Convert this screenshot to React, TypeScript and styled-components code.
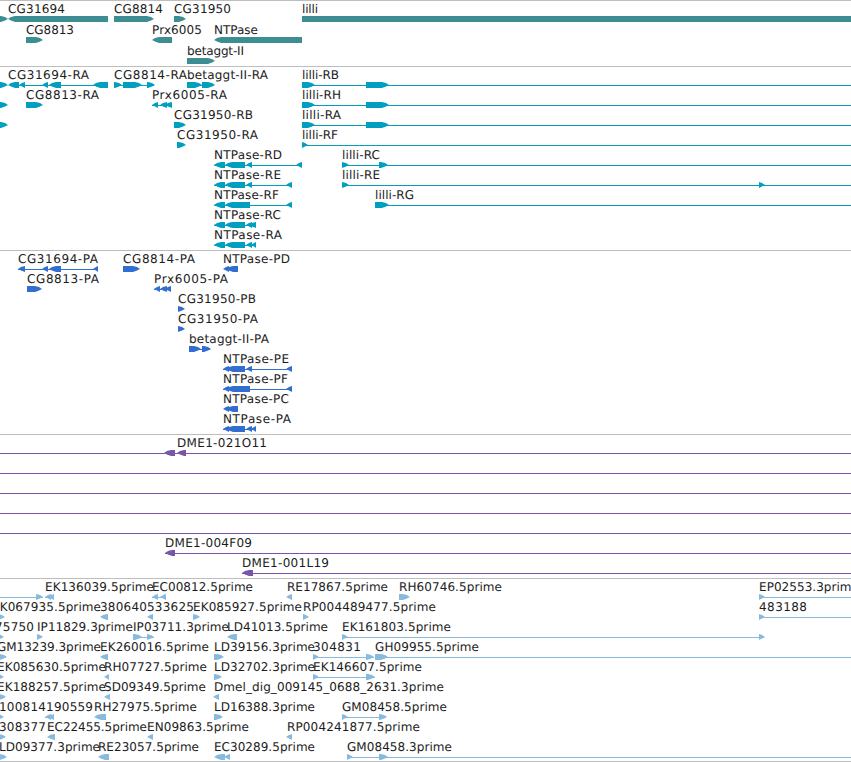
import React from 'react';
import styled, { createGlobalStyle } from 'styled-components';

type Dir = '<' | '>' | '-';
type Exon = [start: number, end: number, dir: Dir];
type Label = [x: number, text: string, width: number];

interface Lane {
  labels?: Label[];
  exons?: Exon[];
  introns?: [number, number][];
}

interface TrackData {
  name: string;
  color: string;
  laneHeight: number;
  lanes: Lane[];
}

const WIDTH = 851;

const tracks: TrackData[] = [
  {
    name: 'genes',
    color: '#3d8e92',
    laneHeight: 21,
    lanes: [
      {
        labels: [[8, 'CG31694', 57], [114, 'CG8814', 49], [174, 'CG31950', 57], [302, 'lilli', 16]],
        exons: [[-9, 8, '>'], [8, 108, '<'], [114, 154, '>'], [174, 186, '>'], [302, 851, '-']],
      },
      {
        labels: [[26, 'CG8813', 48], [152, 'Prx6005', 50], [214, 'NTPase', 44]],
        exons: [[26, 43, '>'], [152, 172, '<'], [214, 302, '<']],
      },
      { labels: [[187, 'betaggt-II', 57]], exons: [[187, 215, '>']] },
    ],
  },
  {
    name: 'transcripts',
    color: '#009fbf',
    laneHeight: 20,
    lanes: [
      {
        labels: [[8, 'CG31694-RA', 81], [114, 'CG8814-RA', 73], [187, 'betaggt-II-RA', 81], [302, 'lilli-RB', 37]],
        exons: [
          [-9, 8, '>'], [8, 19, '<'], [19, 25, '<'], [42, 48, '<'], [49, 61, '<'], [93, 108, '<'],
          [114, 122, '>'], [123, 142, '>'], [147, 155, '>'],
          [187, 202, '>'], [202, 215, '>'], [302, 315, '>'], [366, 389, '>'],
        ],
        introns: [[19, 98], [114, 154], [187, 214], [302, WIDTH]],
      },
      {
        labels: [[26, 'CG8813-RA', 73], [152, 'Prx6005-RA', 75], [302, 'lilli-RH', 39]],
        exons: [[-9, 8, '>'], [26, 43, '>'], [152, 158, '<'], [160, 167, '<'], [165, 172, '<'], [302, 315, '>'], [366, 389, '>']],
        introns: [[152, 172], [302, WIDTH]],
      },
      {
        labels: [[174, 'CG31950-RB', 79], [302, 'lilli-RA', 39]],
        exons: [[-9, 8, '>'], [174, 186, '>'], [302, 315, '>'], [366, 389, '>']],
        introns: [[302, WIDTH]],
      },
      {
        labels: [[177, 'CG31950-RA', 81], [302, 'lilli-RF', 36]],
        exons: [[177, 186, '>'], [302, 308, '>']],
        introns: [[302, WIDTH]],
      },
      {
        labels: [[214, 'NTPase-RD', 68], [342, 'lilli-RC', 38]],
        exons: [[214, 225, '<'], [225, 245, '<'], [246, 252, '<'], [296, 302, '<'], [342, 349, '>'], [379, 388, '>']],
        introns: [[214, 302], [342, WIDTH]],
      },
      {
        labels: [[214, 'NTPase-RE', 67], [342, 'lilli-RE', 38]],
        exons: [[214, 225, '<'], [225, 245, '<'], [246, 252, '<'], [286, 292, '<'], [342, 349, '>'], [759, 765, '>']],
        introns: [[214, 292], [342, WIDTH]],
      },
      {
        labels: [[214, 'NTPase-RF', 65], [375, 'lilli-RG', 39]],
        exons: [[214, 225, '<'], [225, 250, '<'], [286, 292, '<'], [375, 389, '>']],
        introns: [[214, 292], [375, WIDTH]],
      },
      {
        labels: [[214, 'NTPase-RC', 67]],
        exons: [[214, 225, '<'], [225, 245, '<'], [246, 252, '<'], [249, 256, '<']],
        introns: [[214, 256]],
      },
      {
        labels: [[214, 'NTPase-RA', 68]],
        exons: [[214, 225, '<'], [225, 245, '<'], [246, 252, '<'], [251, 256, '<']],
        introns: [[214, 256]],
      },
    ],
  },
  {
    name: 'proteins',
    color: '#326ecf',
    laneHeight: 20,
    lanes: [
      {
        labels: [[18, 'CG31694-PA', 80], [123, 'CG8814-PA', 72], [223, 'NTPase-PD', 67]],
        exons: [[18, 25, '<'], [42, 48, '<'], [49, 61, '<'], [93, 98, '<'], [123, 140, '>'], [223, 229, '<'], [226, 238, '<']],
        introns: [[18, 98]],
      },
      {
        labels: [[27, 'CG8813-PA', 72], [154, 'Prx6005-PA', 74]],
        exons: [[27, 42, '>'], [154, 160, '<'], [160, 167, '<'], [165, 171, '<']],
        introns: [[154, 171]],
      },
      { labels: [[178, 'CG31950-PB', 78]], exons: [[178, 185, '>']] },
      { labels: [[178, 'CG31950-PA', 80]], exons: [[178, 185, '>']] },
      {
        labels: [[189, 'betaggt-II-PA', 80]],
        exons: [[189, 201, '>'], [202, 211, '>']],
        introns: [[189, 210]],
      },
      {
        labels: [[223, 'NTPase-PE', 66]],
        exons: [[223, 229, '<'], [226, 245, '<'], [246, 252, '<'], [286, 292, '<']],
        introns: [[223, 292]],
      },
      {
        labels: [[223, 'NTPase-PF', 65]],
        exons: [[223, 229, '<'], [226, 250, '<'], [286, 292, '<']],
        introns: [[223, 292]],
      },
      { labels: [[223, 'NTPase-PC', 66]], exons: [[223, 229, '<'], [226, 238, '<']] },
      {
        labels: [[223, 'NTPase-PA', 68]],
        exons: [[223, 229, '<'], [226, 245, '<'], [246, 252, '<'], [251, 256, '<']],
        introns: [[223, 256]],
      },
    ],
  },
  {
    name: 'clones',
    color: '#7755a9',
    laneHeight: 20,
    lanes: [
      {
        labels: [[177, 'DME1-021O11', 90]],
        exons: [[164, 175, '<'], [177, 186, '<']],
        introns: [[0, WIDTH]],
      },
      { introns: [[0, WIDTH]] },
      { introns: [[0, WIDTH]] },
      { introns: [[0, WIDTH]] },
      { introns: [[0, WIDTH]] },
      { labels: [[165, 'DME1-004F09', 87]], exons: [[165, 175, '<']], introns: [[165, WIDTH]] },
      { labels: [[242, 'DME1-001L19', 87]], exons: [[242, 253, '<']], introns: [[242, WIDTH]] },
    ],
  },
  {
    name: 'ests',
    color: '#87badd',
    laneHeight: 20,
    lanes: [
      {
        labels: [
          [45, 'EK136039.5prime', 109], [152, 'EC00812.5prime', 101], [287, 'RE17867.5prime', 101],
          [399, 'RH60746.5prime', 103], [759, 'EP02553.3prime', 100],
        ],
        exons: [
          [36, 43, '>'], [45, 51, '<'], [48, 54, '<'], [152, 158, '<'], [160, 166, '<'],
          [286, 292, '<'], [399, 410, '>'], [759, 765, '>'],
        ],
        introns: [[0, 43], [45, 54], [152, 166], [759, WIDTH]],
      },
      {
        labels: [
          [-8, 'EK067935.5prime', 109], [100, '380640', 47], [147, '533625', 47], [193, 'EK085927.5prime', 109],
          [303, 'RP004489477.5prime', 133], [759, '483188', 48],
        ],
        exons: [[-6, 5, '>'], [100, 108, '<'], [147, 153, '<'], [193, 200, '>'], [303, 309, '>'], [759, 765, '>']],
        introns: [[759, WIDTH]],
      },
      {
        labels: [
          [-5, '75750', 39], [37, 'IP11829.3prime', 96], [133, 'IP03711.3prime', 96],
          [227, 'LD41013.5prime', 101], [342, 'EK161803.5prime', 109],
        ],
        exons: [[-6, 4, '>'], [37, 43, '>'], [133, 142, '>'], [147, 154, '>'], [227, 237, '<'], [342, 348, '>'], [759, 765, '>']],
        introns: [[133, 154], [342, 764]],
      },
      {
        labels: [
          [-3, 'GM13239.3prime', 104], [100, 'EK260016.5prime', 109], [214, 'LD39156.3prime', 101],
          [313, '304831', 48], [375, 'GH09955.5prime', 104],
        ],
        exons: [[-8, 7, '>'], [100, 108, '<'], [214, 224, '>'], [313, 319, '>'], [366, 374, '>'], [375, 388, '>']],
        introns: [[313, 374], [375, WIDTH]],
      },
      {
        labels: [
          [-3, 'EK085630.5prime', 109], [104, 'RH07727.5prime', 103], [214, 'LD32702.3prime', 101],
          [313, 'EK146607.5prime', 109],
        ],
        exons: [[-6, 4, '>'], [104, 109, '<'], [214, 222, '>'], [313, 319, '>'], [366, 375, '>']],
        introns: [[313, 375]],
      },
      {
        labels: [[-3, 'EK188257.5prime', 109], [104, 'SD09349.5prime', 102], [214, 'Dmel_dig_009145_0688_2631.3prime', 230]],
        exons: [[-6, 6, '>'], [104, 110, '<'], [213, 219, '<']],
      },
      {
        labels: [
          [-1, '100814190559', 94], [94, 'RH27975.5prime', 103], [214, 'LD16388.3prime', 101],
          [342, 'GM08458.5prime', 105],
        ],
        exons: [[-8, 4, '>'], [45, 51, '<'], [48, 54, '<'], [94, 106, '<'], [214, 223, '>'], [342, 348, '>'], [379, 387, '>']],
        introns: [[45, 54], [342, 386]],
      },
      {
        labels: [[-1, '308377', 47], [47, 'EC22455.5prime', 100], [147, 'EN09863.5prime', 102], [287, 'RP004241877.5prime', 133]],
        exons: [[-6, 6, '>'], [47, 55, '<'], [147, 153, '<'], [286, 292, '<']],
      },
      {
        labels: [
          [-1, 'LD09377.3prime', 101], [98, 'RE23057.5prime', 101], [214, 'EC30289.5prime', 101],
          [347, 'GM08458.3prime', 105],
        ],
        exons: [[-8, 7, '>'], [98, 109, '<'], [214, 225, '<'], [224, 230, '<'], [347, 353, '>'], [379, 388, '>']],
        introns: [[347, WIDTH]],
      },
    ],
  },
];

// body is 6px high, the head narrows to a point over the last few pixels
const exonPath = ([start, end, dir]: Exon) => {
  const head = Math.min(7, end - start);
  if (dir === '>') {
    return `M${start} 12H${end - head}L${end - 3} 13L${end} 15L${end - 3} 16.5L${end - head} 18H${start}Z`;
  }
  if (dir === '<') {
    return `M${end} 12H${start + head}L${start + 3} 13L${start} 15L${start + 3} 16.5L${start + head} 18H${end}Z`;
  }
  return `M${start} 12H${end}V18H${start}Z`;
};

const LaneView = ({ lane, color, height }: { lane: Lane; color: string; height: number }) => {
  const { labels = [], exons = [], introns = [] } = lane;

  return (
    <LaneSvg $height={height} width={WIDTH} height={height}>
      {introns.map(([from, to]) => (
        <rect key={from} x={from} y={15} width={to - from} height={1} fill={color} shapeRendering="crispEdges" />
      ))}
      {exons.map((exon, index) => (
        <path key={index} d={exonPath(exon)} fill={color} />
      ))}
      {labels.map(([x, text, width]) => (
        <LabelText key={x} x={x} y={9} textLength={width}>
          {text}
        </LabelText>
      ))}
    </LaneSvg>
  );
};

const App = () => (
  <>
    <GlobalStyle />
    <Browser>
      {tracks.map(({ name, color, laneHeight, lanes }) => (
        <Track key={name}>
          {lanes.map((lane, index) => (
            <LaneView key={index} lane={lane} color={color} height={laneHeight} />
          ))}
        </Track>
      ))}
    </Browser>
  </>
);

export default App;

const GlobalStyle = createGlobalStyle`
  body {
    margin: 0;
    background: #fff;
  }
`;
const Browser = styled.main`
  width: ${WIDTH}px;
  height: 762px;
  overflow: hidden;
  display: flex;
  flex-direction: column;
`;
const Track = styled.section`
  display: flex;
  flex-direction: column;
  flex-shrink: 0;
  border-top: 1px solid #bebebe;
  padding-top: 3px;
  &:first-child {
    margin-bottom: -1px;
  }
  &:last-child {
    height: 179px;
    border-bottom: 1px solid #bebebe;
  }
`;
const LaneSvg = styled.svg<{ $height: number }>`
  display: block;
  flex: 0 0 ${({ $height }) => $height}px;
  overflow: visible;
`;
const LabelText = styled.text`
  font-family: 'DejaVu Sans', sans-serif;
  font-size: 12px;
  text-rendering: geometricPrecision;
  fill: #1c1c1c;
`;
